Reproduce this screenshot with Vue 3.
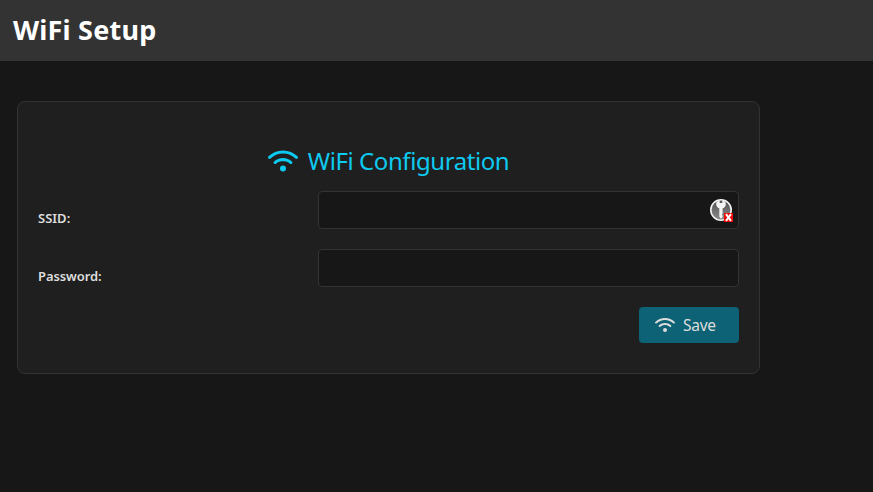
<script setup>
import { ref } from 'vue'

const ssid = ref('')
const password = ref('')
const wifiPath =
  'M54.2 202.9C123.2 136.7 216.8 96 320 96s196.8 40.7 265.8 106.9c12.8 12.2 33 11.8 45.2-.9s11.8-33-.9-45.2C549.7 79.5 440.4 32 320 32S90.3 79.5 9.8 156.7C-2.9 169-3.3 189.2 8.9 202s32.5 13.2 45.2 .9zM320 256c56.8 0 108.6 21.1 148.2 56c13.3 11.7 33.5 10.4 45.2-2.8s10.4-33.5-2.8-45.2C459.8 219.2 393 192 320 192s-139.8 27.2-190.5 72c-13.3 11.7-14.5 31.9-2.8 45.2s31.9 14.5 45.2 2.8c39.5-34.9 91.3-56 148.2-56zm64 160a64 64 0 1 0 -128 0 64 64 0 1 0 128 0z'
</script>

<template>
  <div class="page">
    <header class="topbar">
      <h1>WiFi Setup</h1>
    </header>
    <main>
      <form class="card" @submit.prevent>
        <h2>
          <svg class="wifi-lg" viewBox="0 0 640 512"><path :d="wifiPath" fill="currentColor" /></svg>
          <span class="heading-text">WiFi Configuration</span>
        </h2>
        <div class="row">
          <label for="ssid">SSID:</label>
          <div class="field">
            <input id="ssid" v-model="ssid" type="text" />
            <svg class="key-badge" viewBox="0 0 26 26">
              <defs>
                <linearGradient id="disc" x1="0" y1="0" x2="0" y2="1">
                  <stop offset="0" stop-color="#505050" />
                  <stop offset="1" stop-color="#8c8c8c" />
                </linearGradient>
              </defs>
              <circle cx="12" cy="12" r="10.2" fill="url(#disc)" stroke="#f4f4f4" stroke-width="1.6" />
              <path d="M9.6 2.8 C7.3 3.6 6.8 5.4 7.4 7.4 C7.9 9 9 9.8 10.3 10.3 V18.8 L12 20.8 L13.6 19 V17.6 L12.8 16.6 L13.6 15.6 V10.3 C15 9.8 16.2 9 16.6 7.4 C17.2 5.4 16.7 3.6 14.4 2.8 H13.3 V5 H10.7 V2.8 Z" fill="#f4f4f4" />
              <rect x="15" y="15" width="9" height="9" fill="#f00808" />
              <path d="M17 16.2 L22 22.8 M22 16.2 L17 22.8" stroke="#fff" stroke-width="2" />
            </svg>
          </div>
        </div>
        <div class="row">
          <label class="password-label" for="password">Password:</label>
          <div class="field">
            <input id="password" v-model="password" type="password" />
          </div>
        </div>
        <div class="actions">
          <button type="submit">
            <svg class="wifi-sm" viewBox="0 0 640 512"><path :d="wifiPath" fill="currentColor" /></svg>
            <span class="save-text">Save</span>
          </button>
        </div>
      </form>
    </main>
  </div>
</template>

<style>
body {
  background: #171717;
}
</style>

<style scoped>
* {
  box-sizing: border-box;
}
.page {
  height: 492px;
  overflow: hidden;
  background: #171717;
  color: #ddd;
  font-family: "Noto Sans", sans-serif;
}
.topbar {
  height: 61px;
  padding: 0 0 2px 13px;
  background: #333;
  display: flex;
  align-items: center;
}
h1 {
  margin: 0;
  color: #fff;
  font-size: 27px;
  line-height: 36px;
  font-weight: 700;
  letter-spacing: 0.2px;
  white-space: nowrap;
}
main {
  padding: 40px 113px 0 17px;
}
.card {
  height: 273px;
  padding: 40px 20px 0;
  border: 1px solid #333;
  border-radius: 8px;
  background: #1f1f1f;
}
h2 {
  height: 37px;
  margin: 0 0 12px;
  display: flex;
  align-items: center;
  justify-content: center;
  gap: 10px;
  color: #0dcaf0;
  font-size: 24px;
  font-weight: 400;
  line-height: 37px;
  white-space: nowrap;
}
.heading-text {
  letter-spacing: -0.43px;
}
.wifi-lg {
  width: 30px;
  height: 24px;
}
.row {
  display: grid;
  grid-template-columns: 280px 1fr;
  height: 38px;
  margin-bottom: 20px;
}
label {
  padding-top: 17px;
  font-size: 13px;
  line-height: 20px;
  font-weight: 600;
}
.password-label {
  letter-spacing: -0.1px;
}
.field {
  position: relative;
}
input {
  display: block;
  width: 100%;
  height: 38px;
  padding: 6px 12px;
  border: 1px solid #333;
  border-radius: 4px;
  outline: none;
  background: #171717;
  color: #ddd;
  font: inherit;
}
.key-badge {
  position: absolute;
  top: 7px;
  right: 4px;
  width: 26px;
  height: 26px;
}
.actions {
  display: flex;
  justify-content: flex-end;
}
button {
  width: 100px;
  height: 36px;
  padding: 0 0 0 16px;
  display: flex;
  align-items: center;
  gap: 8px;
  border: 0;
  border-radius: 4px;
  background: #0d6275;
  color: #ddd;
  font: 400 15.5px/22px "Noto Sans", sans-serif;
}
.save-text {
  letter-spacing: -0.25px;
}
.wifi-sm {
  width: 20px;
  height: 16px;
}
</style>
